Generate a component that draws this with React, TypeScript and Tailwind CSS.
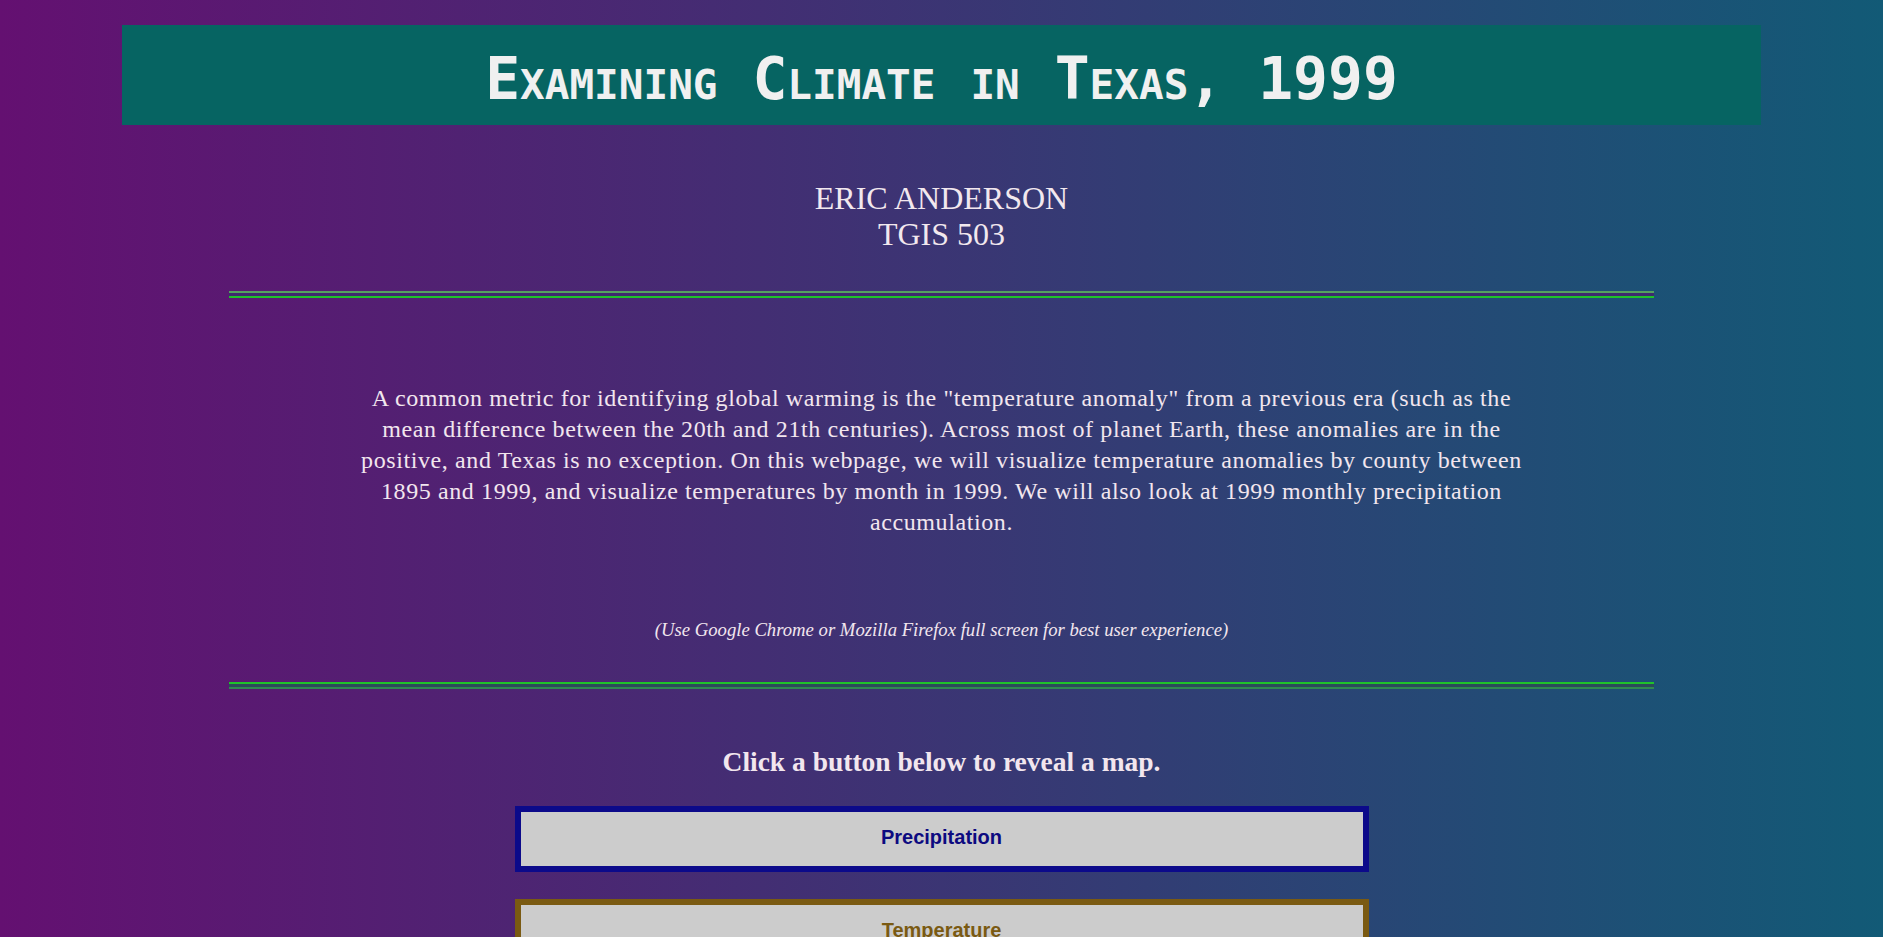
import React from "react";

const serif = { fontFamily: '"Liberation Serif", "Times New Roman", serif' };

function DoubleRule({ top, bottom, gap }: { top: string; bottom: string; gap: string }) {
  return (
    <div className="mx-auto w-[1425px] flex flex-col">
      <div className={`h-[2px] ${top}`} />
      <div className={`h-[3px] ${gap}`} />
      <div className={`h-[2px] ${bottom}`} />
    </div>
  );
}

export default function App() {
  return (
    <div className="min-h-screen w-full bg-[linear-gradient(to_right,#641071,#125a76)] pt-[25px] pb-10">
      <header className="mx-auto w-[1639px] h-[100px] bg-[#066462] flex items-center justify-center pt-[7px]">
        <h1
          className="text-[58px] font-bold text-[#f0f0f0] leading-none"
          style={{ fontFamily: '"DejaVu Sans Mono", monospace', fontVariant: "small-caps" }}
        >
          Examining Climate in Texas, 1999
        </h1>
      </header>

      <div className="mt-[55px] text-center text-[32px] leading-[36px] text-[#f2e8ee]" style={serif}>
        <div>ERIC ANDERSON</div>
        <div>TGIS 503</div>
      </div>

      <div className="mt-[39px]">
        <DoubleRule top="bg-[#55a060]" gap="bg-[#3e2a6e]" bottom="bg-[#1fc22b]" />
      </div>

      <div
        className="mt-[85px] text-center text-[24px] leading-[31px] text-[#f2e6ee] tracking-[0.6px]"
        style={serif}
      >
        <div className="whitespace-nowrap">
          A common metric for identifying global warming is the "temperature anomaly" from a previous era (such as the
        </div>
        <div className="whitespace-nowrap">
          mean difference between the 20th and 21th centuries). Across most of planet Earth, these anomalies are in the
        </div>
        <div className="whitespace-nowrap">
          positive, and Texas is no exception. On this webpage, we will visualize temperature anomalies by county between
        </div>
        <div className="whitespace-nowrap">
          1895 and 1999, and visualize temperatures by month in 1999. We will also look at 1999 monthly precipitation
        </div>
        <div className="whitespace-nowrap">accumulation.</div>
      </div>

      <p className="mt-[80px] text-center italic text-[18.7px] leading-[24px] text-[#f2e6ee]" style={serif}>
        (Use Google Chrome or Mozilla Firefox full screen for best user experience)
      </p>

      <div className="mt-[40px]">
        <DoubleRule top="bg-[#1fc22b]" gap="bg-[#2c4a5a]" bottom="bg-[#2f8a52]" />
      </div>

      <h2 className="mt-[57px] text-center font-bold text-[27.5px] leading-[32px] text-[#f2e6ee]" style={serif}>
        Click a button below to reveal a map.
      </h2>

      <div className="mt-[28px] flex flex-col items-center gap-[27px]">
        <button
          className="w-[854px] h-[66px] border-[6px] border-[#0c0a8a] bg-[#cccccc] text-[20px] font-bold text-[#0c0a80] pb-[4px]"
          style={{ fontFamily: '"Liberation Sans", Arial, sans-serif' }}
        >
          Precipitation
        </button>
        <button
          className="w-[854px] h-[66px] border-[6px] border-[#7a5a12] bg-[#cccccc] text-[20px] font-bold text-[#7a5a12] pb-[4px]"
          style={{ fontFamily: '"Liberation Sans", Arial, sans-serif' }}
        >
          Temperature
        </button>
      </div>
    </div>
  );
}
